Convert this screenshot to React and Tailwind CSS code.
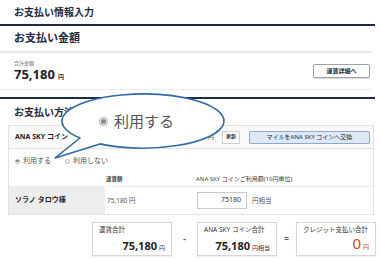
import React from "react";

function Radio({ checked, size = 6 }) {
  return (
    <span
      className="inline-flex items-center justify-center rounded-full border border-[#b5b5b5] bg-white shrink-0"
      style={{ width: size, height: size }}
    >
      {checked && <span className="block rounded-full bg-[#777]" style={{ width: size / 2, height: size / 2 }} />}
    </span>
  );
}

function SumBox({ label, value, unit, red }) {
  return (
    <div className="w-[80px] h-[34px] border border-[#d6d6d6] bg-white flex flex-col justify-between px-[6px] py-[4px] shadow-[0_1px_1px_rgba(0,0,0,0.06)]">
      <div className="text-[6.5px] text-[#333] leading-none whitespace-nowrap">{label}</div>
      <div className="flex items-baseline justify-end gap-[2px] leading-none">
        <span className={red ? "text-[15px] text-[#d0411e]" : "text-[11px] font-bold text-[#222]"}>{value}</span>
        <span className={red ? "text-[6px] text-[#d0411e]" : "text-[6px] text-[#333]"}>{unit}</span>
      </div>
    </div>
  );
}

export default function App() {
  return (
    <div
      className="relative w-[380px] h-[261px] overflow-hidden bg-white text-[#333]"
      style={{ fontFamily: '"Noto Sans", "Noto Sans CJK JP", sans-serif' }}
    >
      {/* 情報入力 */}
      <div className="h-[24px] pl-[14px] flex items-center text-[10px] font-bold text-[#1f2a3c]">お支払い情報入力</div>
      <div className="h-[2px] mr-[5px] bg-[#1e2b44]" />

      {/* 金額 */}
      <div className="h-[25px] pl-[14px] flex items-center text-[11px] font-bold text-[#1f2a3c]">お支払い金額</div>
      <div className="h-[2px] mr-[8px] bg-[#e8e8e8]" />
      <div className="h-[36px] pl-[14px] pr-[10px] flex items-center justify-between">
        <div className="flex flex-col gap-[2px]">
          <span className="text-[5px] text-[#666] leading-none">合計金額</span>
          <span className="flex items-baseline gap-[3px] leading-none">
            <span className="text-[13px] font-bold text-[#222]">75,180</span>
            <span className="text-[6px] font-bold">円</span>
          </span>
        </div>
        <div className="w-[57px] h-[14px] border border-[#9aa3ad] rounded-[2px] bg-white flex items-center justify-center text-[6px] font-bold text-[#1f2a3c] shadow-[0_1px_1px_rgba(0,0,0,0.15)]">
          運賃詳細へ
        </div>
      </div>
      <div className="h-px mr-[8px] bg-[#ececec]" />
      <div className="h-[7px]" />

      {/* 方法 */}
      <div className="h-[2px] mr-[5px] bg-[#1e2b44]" />
      <div className="h-[26px] pl-[14px] flex items-center text-[10px] font-bold text-[#1f2a3c]">お支払い方法</div>

      <div className="ml-[8px] mr-[6px] border border-[#e2e2e2]">
        <div className="h-[23px] pl-[6px] pr-[3px] flex items-center bg-[#fafafa] border-b border-[#e2e2e2]">
          <span className="text-[7px] font-bold text-[#222]">ANA SKY コイン</span>
          <span className="ml-auto text-[6px] text-[#555]">円</span>
          <span className="ml-[8px] w-[18px] h-[13px] border border-[#cfcfcf] bg-white flex items-center justify-center text-[5px] font-bold text-[#333]">更新</span>
          <span className="ml-[9px] w-[121px] h-[13px] border border-[#8ea9cb] rounded-[2px] bg-[#dfe9f6] flex items-center justify-center text-[6px] text-[#1f2a3c]">
            マイルをANA SKY コインへ交換
          </span>
        </div>

        <div className="h-[24px] pl-[6px] flex items-center gap-[3px] text-[7px] text-[#555]">
          <Radio checked size={5} />
          <span>利用する</span>
          <span className="w-[8px]" />
          <Radio size={5} />
          <span>利用しない</span>
        </div>

        <div className="h-[13px] flex items-center text-[6px] text-[#444]">
          <span className="w-[97px]" />
          <span className="w-[90px] font-bold text-[5.5px]">運賃額</span>
          <span className="whitespace-nowrap">ANA SKY コインご利用額(10円単位)</span>
        </div>

        <div className="h-[28px] flex items-stretch border-t border-[#ededed]">
          <div className="w-[96px] bg-[#ededed] pl-[6px] flex items-center text-[7px] font-bold text-[#222]">ソラノ タロウ様</div>
          <div className="w-[92px] pl-[2px] flex items-center text-[6.5px] text-[#555]">75,180 円</div>
          <div className="flex items-center gap-[5px]">
            <div className="w-[50px] h-[17px] border border-[#c9c9c9] bg-white flex items-center justify-end pr-[5px] text-[7px] text-[#333]">75180</div>
            <span className="text-[6.5px] text-[#555]">円相当</span>
          </div>
        </div>
      </div>

      {/* 合計 */}
      <div className="mt-[7px] pl-[92px] flex items-center">
        <SumBox label="運賃合計" value="75,180" unit="円" />
        <span className="w-[25px] text-center text-[8px] font-bold text-[#555]">-</span>
        <SumBox label="ANA SKY コイン合計" value="75,180" unit="円相当" />
        <span className="w-[19px] text-center text-[8px] font-bold text-[#555]">=</span>
        <SumBox label="クレジット支払い合計" value="0" unit="円" red />
      </div>

      {/* 吹き出し */}
      <svg className="absolute left-0 top-0 pointer-events-none" width="380" height="261" viewBox="0 0 380 261">
        <path
          d="M 80 138 L 55 158 L 100 143.9 A 81 27 0 1 0 80 138 Z"
          fill="#ffffff"
          stroke="#2f6aa6"
          strokeWidth="1.6"
          strokeLinejoin="round"
        />
      </svg>
      <div className="absolute left-[99px] top-[110px] h-[22px] flex items-center gap-[6px] text-[15px] text-[#555]">
        <span className="inline-flex items-center justify-center w-[9px] h-[9px] rounded-full border border-[#aaa] bg-[#f2f2f2]">
          <span className="block w-[5px] h-[5px] rounded-full bg-[#888]" />
        </span>
        <span>利用する</span>
      </div>
    </div>
  );
}
